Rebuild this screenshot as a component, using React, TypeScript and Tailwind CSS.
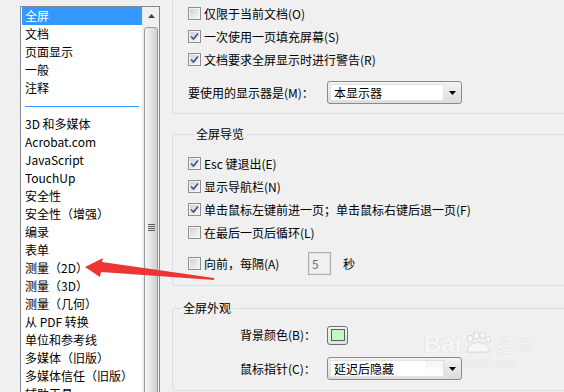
import React from "react";

const listItems = [
  "全屏",
  "文档",
  "页面显示",
  "一般",
  "注释",
  "---",
  "3D 和多媒体",
  "Acrobat.com",
  "JavaScript",
  "TouchUp",
  "安全性",
  "安全性（增强）",
  "编录",
  "表单",
  "测量（2D）",
  "测量（3D）",
  "测量（几何）",
  "从 PDF 转换",
  "单位和参考线",
  "多媒体（旧版）",
  "多媒体信任（旧版）",
  "辅助工具",
];

function CheckBox({ checked }: { checked?: boolean }) {
  return (
    <span className="flex h-[13px] w-[13px] shrink-0 items-center justify-center border border-[#8e8f8f] bg-[#f4f4f4]">
      <span className="relative flex h-[9px] w-[9px] items-center justify-center bg-gradient-to-br from-[#cfd1d4] to-[#f7f7f7]">
        {checked && (
          <svg width="11" height="11" viewBox="0 0 11 11" className="absolute">
            <path d="M2 5.5 L4.5 8 L9 2.5" fill="none" stroke="#3d5190" strokeWidth="1.6" />
          </svg>
        )}
      </span>
    </span>
  );
}

function CheckRow({ label, checked }: { label: string; checked?: boolean }) {
  return (
    <div className="flex h-[23px] items-center gap-[3px]">
      <CheckBox checked={checked} />
      <span className="whitespace-nowrap">{label}</span>
    </div>
  );
}

function Combo({ value }: { value: string }) {
  return (
    <div className="flex h-[23px] w-[135px] shrink-0 items-stretch rounded-[3px] border border-[#8a8a8a] bg-gradient-to-b from-[#f3f3f3] to-[#dddddd] p-[2px] pr-0">
      <div className="flex flex-1 items-center border border-[#e2e2e2] bg-white pl-[3px] leading-none">{value}</div>
      <div className="flex w-[17px] items-center justify-center">
        <svg width="7" height="4" viewBox="0 0 7 4">
          <path d="M0 0 H7 L3.5 4 Z" fill="#000" />
        </svg>
      </div>
    </div>
  );
}

export default function App() {
  return (
    <div className="relative flex h-[392px] w-[564px] overflow-hidden bg-[#f0f0f0] font-['Noto_Sans_CJK_SC','Microsoft_YaHei',sans-serif] text-[12px] leading-[18px] text-black">
      {/* Category list */}
      <div className="w-[172px] shrink-0 pl-[20px] pt-[6px]">
        <div className="flex h-[400px] w-[140px] border border-[#828790] bg-white">
          <div className="w-[121px] pl-[1px]">
            {listItems.map((item) =>
              item === "---" ? (
                <div key="sep" className="flex h-[18px] items-center px-[3px]">
                  <div className="h-px w-full bg-[#3399ff]" />
                </div>
              ) : (
                <div
                  key={item}
                  className={
                    item === "全屏"
                      ? "h-[18px] whitespace-nowrap bg-[#3399ff] pl-[3px] text-white"
                      : "h-[18px] whitespace-nowrap pl-[3px]"
                  }
                >
                  {item}
                </div>
              )
            )}
          </div>
          {/* Scrollbar */}
          <div className="flex w-[17px] flex-col border-l border-[#e8e8e8] bg-[#f0f0f0]">
            <div className="flex h-[18px] items-center justify-center">
              <svg width="7" height="4" viewBox="0 0 7 4">
                <path d="M0 4 H7 L3.5 0 Z" fill="#404040" />
              </svg>
            </div>
            <div className="mx-[1px] mt-[2px] flex flex-1 flex-col items-center rounded-t-[3px] border border-[#9a9a9a] bg-gradient-to-r from-[#f6f6f6] via-[#e4e4e4] to-[#cfcfcf] pt-[196px]">
              <div className="flex flex-col gap-[1px]">
                <div className="h-px w-[7px] bg-[#5a5a5a]" />
                <div className="h-px w-[7px] bg-[#5a5a5a]" />
                <div className="h-px w-[7px] bg-[#5a5a5a]" />
                <div className="h-px w-[7px] bg-[#5a5a5a]" />
              </div>
            </div>
          </div>
        </div>
      </div>

      {/* Settings */}
      <div className="flex w-[420px] shrink-0 flex-col">
        <div className="rounded-b-[3px] border-x border-b border-[#d5dfe5] pb-[9px] pl-[15px] pt-[2px]">
          <CheckRow label="仅限于当前文档(O)" />
          <CheckRow label="一次使用一页填充屏幕(S)" checked />
          <CheckRow label="文档要求全屏显示时进行警告(R)" checked />
          <div className="mt-[10px] flex items-center">
            <span className="w-[139px] whitespace-nowrap">要使用的显示器是(M)：</span>
            <Combo value="本显示器" />
          </div>
        </div>

        <fieldset className="mt-[11px] rounded-[3px] border border-[#d5dfe5] pb-[10px] pl-[15px] pt-[9px]">
          <legend className="ml-[6px] px-[2px] leading-[18px]">全屏导览</legend>
          <CheckRow label="Esc 键退出(E)" checked />
          <CheckRow label="显示导航栏(N)" checked />
          <CheckRow label="单击鼠标左键前进一页；单击鼠标右键后退一页(F)" checked />
          <CheckRow label="在最后一页后循环(L)" />
          <div className="mt-[8px] flex h-[23px] items-center">
            <div className="flex w-[120px] items-center gap-[3px]">
              <CheckBox />
              <span className="whitespace-nowrap">向前，每隔(A)</span>
            </div>
            <div className="flex h-[23px] w-[23px] items-center border border-[#adadad] bg-[#f0f0f0] pl-[3px] text-[#6d6d6d] shadow-[inset_0_0_0_1px_#e3e3e3]">
              5
            </div>
            <span className="ml-[12px]">秒</span>
          </div>
        </fieldset>

        <fieldset className="mt-[13px] rounded-[3px] border border-[#d5dfe5] pb-[10px] pl-[67px] pt-[6px]">
          <legend className="-ml-[59px] px-[2px] leading-[18px]">全屏外观</legend>
          <div className="flex h-[24px] items-center">
            <span className="w-[87px] whitespace-nowrap">背景颜色(B)：</span>
            <div className="flex h-[19px] w-[21px] items-center justify-center rounded-[3px] border border-[#707070] bg-gradient-to-b from-[#f6f6f6] to-[#e2e2e2]">
              <div className="h-[12px] w-[14px] border border-[#5c5c5c] bg-[#c2f8c2]" />
            </div>
          </div>
          <div className="mt-[10px] flex items-center">
            <span className="w-[87px] whitespace-nowrap">鼠标指针(C)：</span>
            <Combo value="延迟后隐藏" />
          </div>
        </fieldset>
      </div>

      {/* Baidu watermark */}
      <div className="pointer-events-none absolute left-[424px] top-[330px] flex flex-col opacity-50">
        <div className="flex items-end gap-[2px]">
          <span className="font-['Liberation_Sans',sans-serif] text-[24px] font-bold leading-[24px] text-white [text-shadow:0_0_1px_#a8a8a8]">
            Bai
          </span>
          <svg width="28" height="26" viewBox="0 0 40 34">
            <g fill="#fff" stroke="#b4b4b4" strokeWidth="1.2">
              <ellipse cx="10" cy="11" rx="4" ry="5" />
              <ellipse cx="19" cy="6" rx="4" ry="5" />
              <ellipse cx="28" cy="6" rx="4" ry="5" />
              <ellipse cx="36" cy="12" rx="3.5" ry="4.5" />
              <path d="M6 30 C6 20 16 16 22 16 C30 16 38 22 38 30 Z" />
            </g>
          </svg>
          <span className="ml-[4px] text-[17px] leading-[22px] text-white [text-shadow:0_0_1px_#a8a8a8]">经验</span>
        </div>
        <span className="pl-[2px] font-['Liberation_Sans',sans-serif] text-[11px] leading-[14px] text-white [text-shadow:0_0_1px_#a8a8a8]">
          jingyan.baidu.com
        </span>
      </div>

      {/* Red annotation arrow */}
      <svg className="pointer-events-none absolute left-0 top-0" width="564" height="392" viewBox="0 0 564 392">
        <polygon
          points="85,267 103,258 102,262 214,278 214,280 101,272 100,277"
          fill="#ee3535"
        />
      </svg>
    </div>
  );
}
